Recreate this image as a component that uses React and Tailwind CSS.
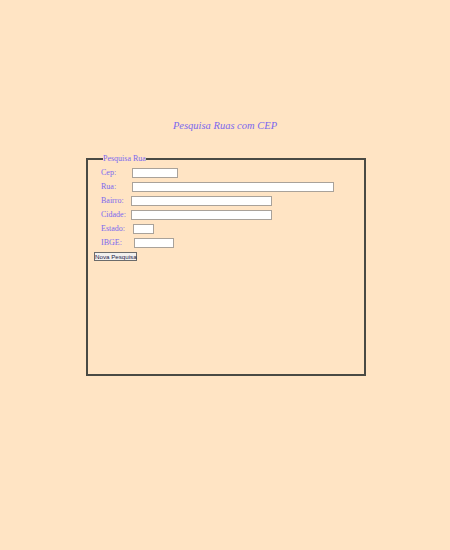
const fields = [
  { label: 'Cep:', width: 'w-[46px]', offset: 'ml-0' },
  { label: 'Rua:', width: 'w-[202px]', offset: 'ml-0' },
  { label: 'Bairro:', width: 'w-[141px]', offset: 'ml-[-1px]' },
  { label: 'Cidade:', width: 'w-[141px]', offset: 'ml-[-1px]' },
  { label: 'Estado:', width: 'w-[21px]', offset: 'ml-[1px]' },
  { label: 'IBGE:', width: 'w-[40px]', offset: 'ml-[2px]' },
];

export default function App() {
  return (
    <div className="min-h-screen w-full bg-[#ffe4c4] font-['Liberation_Serif',serif] pt-[119px]">
      <h1 className="text-center text-[10.5px] leading-[13px] italic text-[#7b68ee]">
        Pesquisa Ruas com CEP
      </h1>

      <fieldset className="ml-[86px] mt-[22px] w-[280px] h-[222px] border-2 border-[#4a4a44] pl-[6px] pr-2">
        <legend className="ml-[9px] px-0 text-[8px] leading-[10px] text-[#7b68ee]">Pesquisa Rua</legend>

        <div className="mt-[2px] flex flex-col">
          {fields.map((f) => (
            <div key={f.label} className="flex h-[14px] items-center">
              <span className="ml-[7px] w-[31px] shrink-0 text-[8px] leading-[10px] text-[#7b68ee]">{f.label}</span>
              <input
                type="text"
                className={`${f.offset} ${f.width} h-[10px] border border-[#a9a29a] bg-white`}
              />
            </div>
          ))}
        </div>

        <button className="mt-[2px] block h-[9px] w-[43px] whitespace-nowrap border border-[#6b6b6b] bg-[#f2f0ee] px-0 text-center font-['Liberation_Sans',sans-serif] text-[6.2px] leading-[7px] text-[#1a1a4a]">
          Nova Pesquisa
        </button>
      </fieldset>
    </div>
  );
}
